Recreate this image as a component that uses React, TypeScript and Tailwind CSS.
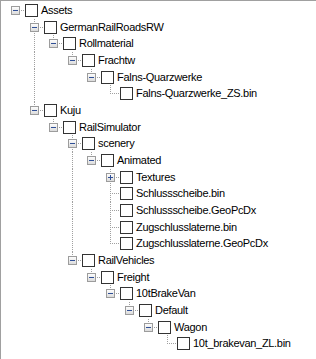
type Node = { label: string; children?: Node[]; collapsed?: boolean }

const TREE: Node = {
  label: "Assets",
  children: [
    {
      label: "GermanRailRoadsRW",
      children: [
        {
          label: "Rollmaterial",
          children: [
            {
              label: "Frachtw",
              children: [
                { label: "Falns-Quarzwerke", children: [{ label: "Falns-Quarzwerke_ZS.bin" }] },
              ],
            },
          ],
        },
      ],
    },
    {
      label: "Kuju",
      children: [
        {
          label: "RailSimulator",
          children: [
            {
              label: "scenery",
              children: [
                {
                  label: "Animated",
                  children: [
                    { label: "Textures", children: [], collapsed: true },
                    { label: "Schlussscheibe.bin" },
                    { label: "Schlussscheibe.GeoPcDx" },
                    { label: "Zugschlusslaterne.bin" },
                    { label: "Zugschlusslaterne.GeoPcDx" },
                  ],
                },
              ],
            },
            {
              label: "RailVehicles",
              children: [
                {
                  label: "Freight",
                  children: [
                    {
                      label: "10tBrakeVan",
                      children: [
                        {
                          label: "Default",
                          children: [{ label: "Wagon", children: [{ label: "10t_brakevan_ZL.bin" }] }],
                        },
                      ],
                    },
                  ],
                },
              ],
            },
          ],
        },
      ],
    },
  ],
}

type Row = {
  label: string
  level: number
  last: boolean
  guides: boolean[] // per ancestor column 1..level-1: draw a through line
  expander: "none" | "minus" | "plus"
}

function flatten(node: Node, level: number, last: boolean, guides: boolean[], out: Row[]) {
  const expander = node.children ? (node.collapsed ? "plus" : "minus") : "none"
  out.push({ label: node.label, level, last, guides, expander })
  if (node.children && !node.collapsed) {
    const nextGuides = level >= 1 ? [...guides, !last] : guides
    node.children.forEach((c, i) => flatten(c, level + 1, i === node.children!.length - 1, nextGuides, out))
  }
  return out
}

const ROWS = flatten(TREE, 0, true, [], [])

const DOT = "#a0a0a0"

function Gutter({ row, h, id }: { row: Row; h: number; id: string }) {
  const L = row.level
  const W = 24 + 19 * L
  const cx = (k: number) => 14.5 + 19 * k
  return (
    <svg width={W} height={h} className="shrink-0" shapeRendering="crispEdges">
      <defs>
        <linearGradient id={id} x1="0" y1="0" x2="0" y2="1">
          <stop offset="0" stopColor="#ffffff" />
          <stop offset="1" stopColor="#d9d9d9" />
        </linearGradient>
      </defs>
      {/* ancestor guide lines */}
      {row.guides.map((g, i) =>
        g ? <line key={i} x1={cx(i + 1)} y1={0} x2={cx(i + 1)} y2={h} stroke={DOT} strokeDasharray="1 1" /> : null
      )}
      {/* own column */}
      {L >= 1 && (
        <line x1={cx(L)} y1={0} x2={cx(L)} y2={row.last ? 9 : h} stroke={DOT} strokeDasharray="1 1" />
      )}
      {/* tick to checkbox */}
      <line x1={19 * L + 14} y1={8.5} x2={W} y2={8.5} stroke={DOT} strokeDasharray="1 1" />
      {row.expander !== "none" && (
        <g>
          <rect x={10.5 + 19 * L} y={4.5} width={8} height={8} fill={`url(#${id})`} stroke="#9c9c9c" />
          <line x1={12 + 19 * L} y1={8.5} x2={17 + 19 * L} y2={8.5} stroke="#2f4f96" />
          {row.expander === "plus" && (
            <line x1={14.5 + 19 * L} y1={6} x2={14.5 + 19 * L} y2={11} stroke="#2f4f96" />
          )}
        </g>
      )}
    </svg>
  )
}

export default function App() {
  return (
    <div className="w-[316px] h-[359px] overflow-hidden bg-white border-l border-t border-[#a0a0a0] pt-[1px]">
      {ROWS.map((row, idx) => {
        const short = idx % 3 === 1
        return (
          <div key={idx} className={`flex items-start ${short ? "h-[16px]" : "h-[17px]"}`}>
            <Gutter row={row} h={short ? 16 : 17} id={`exp${idx}`} />
            <span className="mt-[2px] w-[13px] h-[13px] shrink-0 border border-[#333333] bg-white" />
            <span className="ml-[3px] font-['Liberation_Sans',Arial,sans-serif] text-[11px] leading-[17px] text-black whitespace-nowrap tracking-[-0.3px]">
              {row.label}
            </span>
          </div>
        )
      })}
    </div>
  )
}
